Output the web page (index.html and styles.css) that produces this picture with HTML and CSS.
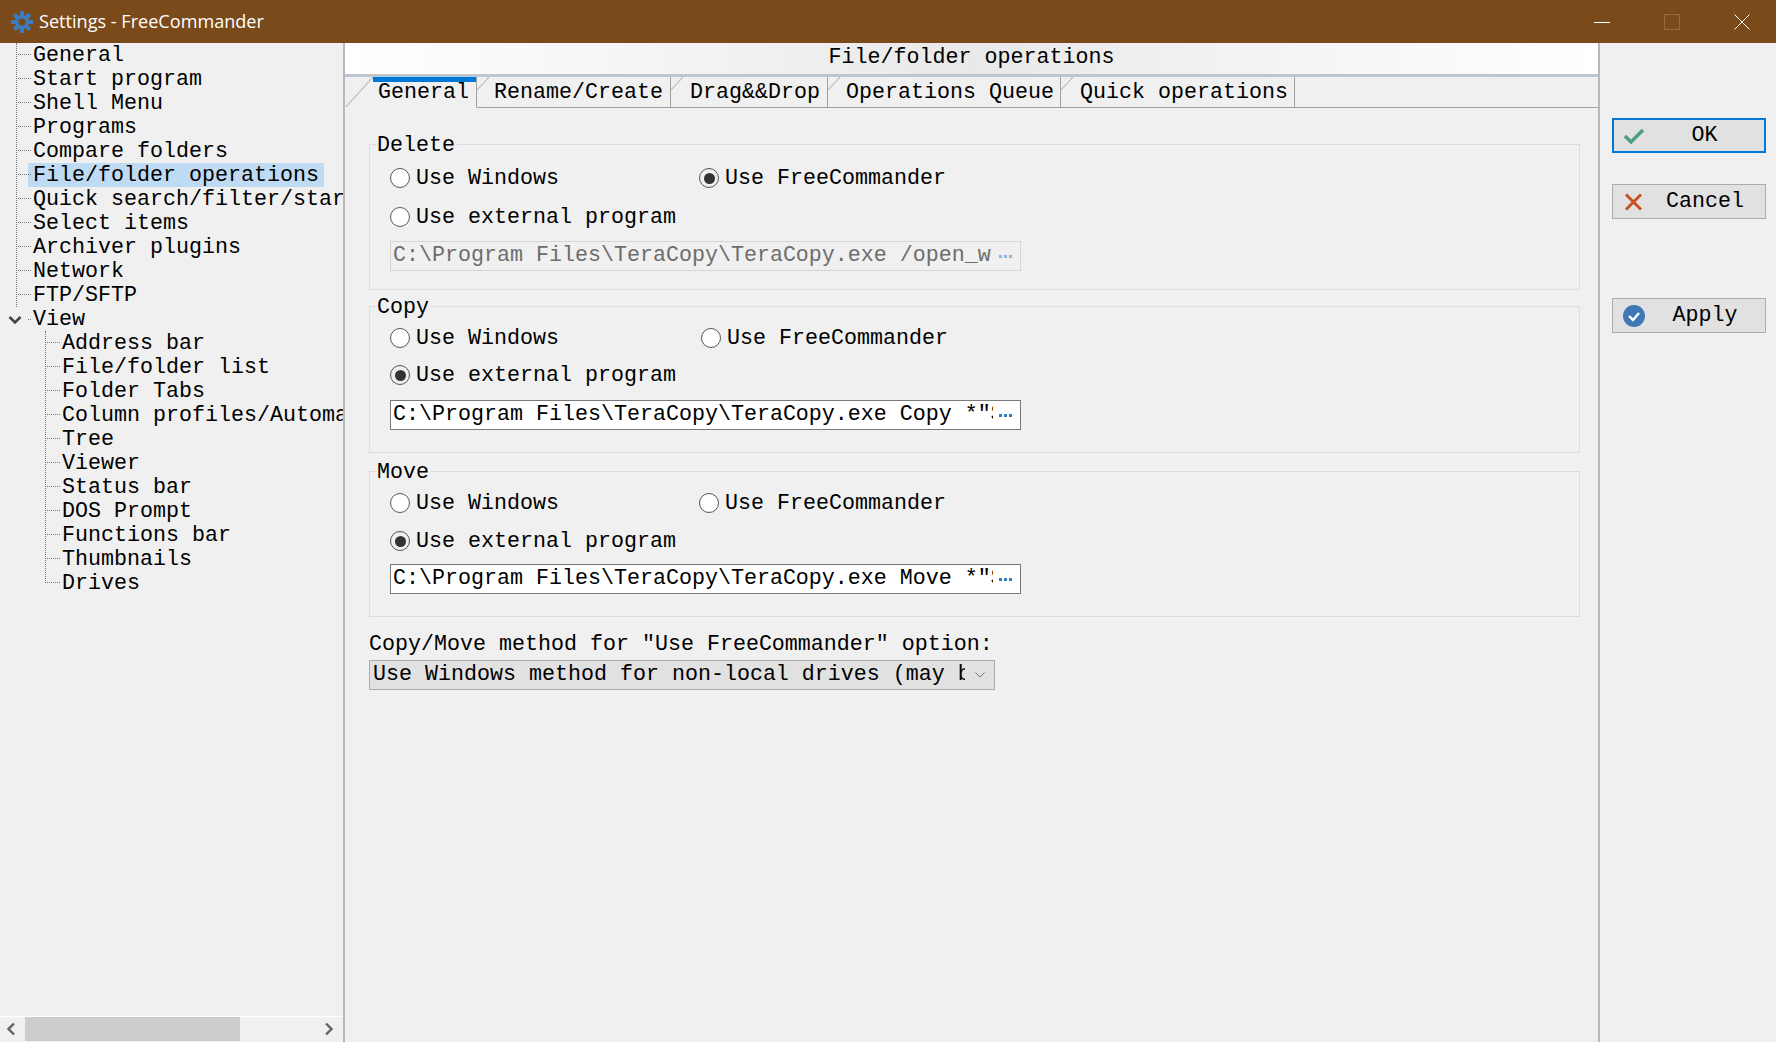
FILE: index.html
```html
<!DOCTYPE html>
<html lang="en">
<head>
<meta charset="utf-8">
<title>Settings - FreeCommander</title>
<link rel="stylesheet" href="styles.css">
</head>
<body>
<div class="window">
  <header class="titlebar">
    <svg class="app-icon" viewBox="0 0 24 24" width="24" height="24"><g fill="#3a7cbc"><path d="M12 5a7 7 0 1 0 0 14a7 7 0 0 0 0-14zm0 3.4a3.6 3.6 0 1 1 0 7.2a3.6 3.6 0 0 1 0-7.2z" fill-rule="evenodd"/><rect x="10" y="1" width="4" height="5"/><rect x="10" y="18" width="4" height="5"/><rect x="1" y="10" width="5" height="4"/><rect x="18" y="10" width="5" height="4"/><rect x="10" y="1" width="4" height="5" transform="rotate(45 12 12)"/><rect x="10" y="18" width="4" height="5" transform="rotate(45 12 12)"/><rect x="1" y="10" width="5" height="4" transform="rotate(45 12 12)"/><rect x="18" y="10" width="5" height="4" transform="rotate(45 12 12)"/></g></svg>
    <span class="title-text">Settings - FreeCommander</span>
    <div class="win-controls">
      <svg class="wc" viewBox="0 0 16 16" width="16" height="16"><path d="M0 8.5H16" stroke="#fff" fill="none"/></svg>
      <svg class="wc" viewBox="0 0 16 16" width="16" height="16"><rect x="0.5" y="0.5" width="15" height="15" stroke="#976b42" fill="none"/></svg>
      <svg class="wc" viewBox="0 0 16 16" width="16" height="16"><path d="M0.5 0.5L15.5 15.5M15.5 0.5L0.5 15.5" stroke="#fff" fill="none"/></svg>
    </div>
  </header>
  <div class="body">
    <aside class="tree-pane">
      <div class="tree-scroll">
        <ul class="tree">
          <li><span class="node">General</span></li>
          <li><span class="node">Start program</span></li>
          <li><span class="node">Shell Menu</span></li>
          <li><span class="node">Programs</span></li>
          <li><span class="node">Compare folders</span></li>
          <li><span class="node selected">File/folder operations</span></li>
          <li><span class="node">Quick search/filter/start</span></li>
          <li><span class="node">Select items</span></li>
          <li><span class="node">Archiver plugins</span></li>
          <li><span class="node">Network</span></li>
          <li><span class="node">FTP/SFTP</span></li>
          <li class="parent"><svg class="twisty" viewBox="0 0 14 10" width="14" height="10"><path d="M1.5 2L7 7.5L12.5 2" stroke="#444" stroke-width="2.6" fill="none"/></svg><span class="node">View</span></li>
        </ul>
        <ul class="tree sub">
          <li><span class="node">Address bar</span></li>
          <li><span class="node">File/folder list</span></li>
          <li><span class="node">Folder Tabs</span></li>
          <li><span class="node">Column profiles/Automatic</span></li>
          <li><span class="node">Tree</span></li>
          <li><span class="node">Viewer</span></li>
          <li><span class="node">Status bar</span></li>
          <li><span class="node">DOS Prompt</span></li>
          <li><span class="node">Functions bar</span></li>
          <li><span class="node">Thumbnails</span></li>
          <li><span class="node">Drives</span></li>
        </ul>
      </div>
      <div class="hscroll">
        <svg viewBox="0 0 10 14" width="10" height="14"><path d="M8 1.5L2.5 7L8 12.5" stroke="#606060" stroke-width="2.4" fill="none"/></svg>
        <div class="hscroll-track"><div class="hscroll-thumb"></div></div>
        <svg viewBox="0 0 10 14" width="10" height="14"><path d="M2 1.5L7.5 7L2 12.5" stroke="#606060" stroke-width="2.4" fill="none"/></svg>
      </div>
    </aside>
    <main class="content">
      <h1 class="page-title">File/folder operations</h1>
      <div class="page-rule"></div>
      <nav class="tabs">
        <span class="tab active t-general">General</span>
        <span class="tab t-rename">Rename/Create</span>
        <span class="tab t-drag">Drag&amp;&amp;Drop</span>
        <span class="tab t-ops">Operations Queue</span>
        <span class="tab t-quick">Quick operations</span>
      </nav>
      <div class="page">
        <section class="group g-delete">
          <div class="legend">Delete</div>
          <div class="row r1">
            <label class="opt col1"><i class="radio"></i><span class="opt-text">Use Windows</span></label>
            <label class="opt"><i class="radio on"></i><span class="opt-text">Use FreeCommander</span></label>
          </div>
          <div class="row r2"><label class="opt"><i class="radio"></i><span class="opt-text">Use external program</span></label></div>
          <div class="path disabled"><span class="path-text">C:\Program Files\TeraCopy\TeraCopy.exe /open_with</span><span class="dots"><b></b><b></b><b></b></span></div>
        </section>
        <section class="group g-copy">
          <div class="legend">Copy</div>
          <div class="row r1">
            <label class="opt col1 wide"><i class="radio"></i><span class="opt-text">Use Windows</span></label>
            <label class="opt"><i class="radio"></i><span class="opt-text">Use FreeCommander</span></label>
          </div>
          <div class="row r2"><label class="opt"><i class="radio on"></i><span class="opt-text">Use external program</span></label></div>
          <div class="path"><span class="path-text">C:\Program Files\TeraCopy\TeraCopy.exe Copy *"$</span><span class="dots"><b></b><b></b><b></b></span></div>
        </section>
        <section class="group g-move">
          <div class="legend">Move</div>
          <div class="row r1">
            <label class="opt col1"><i class="radio"></i><span class="opt-text">Use Windows</span></label>
            <label class="opt"><i class="radio"></i><span class="opt-text">Use FreeCommander</span></label>
          </div>
          <div class="row r2"><label class="opt"><i class="radio on"></i><span class="opt-text">Use external program</span></label></div>
          <div class="path"><span class="path-text">C:\Program Files\TeraCopy\TeraCopy.exe Move *"$</span><span class="dots"><b></b><b></b><b></b></span></div>
        </section>
        <div class="method-label">Copy/Move method for "Use FreeCommander" option:</div>
        <div class="select">
          <span class="select-text">Use Windows method for non-local drives (may be slow)</span>
          <svg viewBox="0 0 12 8" width="12" height="8"><path d="M1.5 1.5L6 6L10.5 1.5" stroke="#777" fill="none"/></svg>
        </div>
      </div>
    </main>
    <aside class="actions">
      <button class="btn primary">
        <svg viewBox="0 0 22 16" width="22" height="16"><path d="M2 8L8 14L20 2" stroke="#4f9e7c" stroke-width="3.4" fill="none"/></svg>
        <span class="btn-label">OK</span>
      </button>
      <button class="btn cancel">
        <svg viewBox="0 0 22 18" width="22" height="18"><path d="M3 1.5L18 16.5M18 1.5L3 16.5" stroke="#c9511f" stroke-width="3" fill="none"/></svg>
        <span class="btn-label">Cancel</span>
      </button>
      <button class="btn apply">
        <svg viewBox="0 0 22 22" width="22" height="22"><circle cx="11" cy="11" r="11" fill="#3f78b5"/><path d="M6 11L10 15L16 8" stroke="#fff" stroke-width="2.4" fill="none"/></svg>
        <span class="btn-label">Apply</span>
      </button>
    </aside>
  </div>
</div>
</body>
</html>
```
FILE: styles.css
```css
* { box-sizing: border-box; }
html, body { margin: 0; height: 100%; }
body {
  background: #f0f0f0;
  color: #000;
  font-family: "Liberation Mono", monospace;
  font-size: 21.67px;
  overflow: hidden;
}
.window { width: 1776px; height: 1042px; display: flex; flex-direction: column; }

.titlebar {
  height: 43px;
  flex: none;
  background: #7a4a1a;
  display: flex;
  align-items: center;
  padding-left: 10px;
}
.app-icon { margin-right: 5px; }
.title-text { font-family: "Open Sans", sans-serif; font-size: 18.1px; color: #fff; position: relative; top: -1px; }
.win-controls { margin-left: auto; display: flex; gap: 54px; padding-right: 26px; }
.wc { display: block; }

.body { flex: 1; display: flex; min-height: 0; }

.tree-pane {
  width: 345px;
  flex: none;
  border-right: 2px solid #b9b9b9;
  display: flex;
  flex-direction: column;
}
.tree-scroll { flex: 1; overflow: hidden; white-space: nowrap; }
.tree { list-style: none; margin: 0 0 0 16px; padding: 0; position: relative; }
.tree::before {
  content: "";
  position: absolute;
  left: 0;
  top: 0;
  bottom: 24px;
  border-left: 1px dotted #777;
}
.tree li {
  height: 24px;
  padding-left: 17px;
  position: relative;
}
.tree li::before {
  content: "";
  position: absolute;
  left: 0;
  width: 15px;
  top: 11px;
  border-top: 1px dotted #777;
}
.tree li.parent::before { left: 12px; width: 3px; top: 12px; }
.node { display: block; width: fit-content; height: 24px; line-height: 26px; }
.node.selected { background: #bfdbf3; margin-left: -5px; padding-left: 5px; padding-right: 5px; }
.twisty { position: absolute; left: -8px; top: 8px; }
.tree.sub { margin-left: 45px; }
.tree.sub::before { bottom: 12px; }

.hscroll {
  flex: none;
  height: 26px;
  border-top: 1px solid #fff;
  display: flex;
  align-items: center;
  padding: 0 9px 1px 6px;
}
.hscroll-track { flex: 1; align-self: stretch; padding-left: 9px; margin-right: 9px; }
.hscroll-thumb { width: 215px; height: 100%; background: #cdcdcd; }

.content { flex: none; width: 1255px; border-right: 2px solid #b9b9b9; display: flex; flex-direction: column; }
.page-title {
  margin: 0;
  height: 31px;
  line-height: 30px;
  font-size: inherit;
  font-weight: normal;
  text-align: center;
  background: linear-gradient(90deg, #fff 0%, #e9e9e9 50%, #fff 100%);
}
.page-rule { height: 3px; background: #c4c4c4; border-bottom: 1px solid #a9cdf0; flex: none; }

.tabs {
  display: flex;
  height: 31px;
  flex: none;
  border-bottom: 1px solid #a0a0a0;
  white-space: pre;
  line-height: 32px;
}
.tab {
  height: 31px;
  position: relative;
  border-right: 1px solid #a0a0a0;
  border-bottom: 1px solid #a0a0a0;
  background: linear-gradient(to bottom right, transparent calc(50% - 1px), #b5b5b5 50%, transparent calc(50% + 1px)) left top / 12px 13px no-repeat, #f0f0f0;
}
.t-general {
  width: 132px;
  padding-left: 33px;
  background: linear-gradient(to bottom right, transparent calc(50% - 1px), #b5b5b5 50%, transparent calc(50% + 1px)) left top / 28px 31px no-repeat, #f0f0f0;
  border-bottom-color: #f0f0f0;
}
.t-general::before {
  content: "";
  position: absolute;
  left: 28px;
  right: 0;
  top: 0;
  height: 5px;
  background: #0078d7;
}
.t-rename { width: 194px; padding-left: 17px; }
.t-drag { width: 157px; padding-left: 19px; }
.t-ops { width: 233px; padding-left: 18px; }
.t-quick { width: 234px; padding-left: 19px; }

.page { padding: 36px 18px 0 24px; flex: 1; }
.group { border: 1px solid #dcdcdc; padding: 0 0 0 20px; }
.g-delete { height: 146px; }
.g-copy { height: 147px; margin-top: 16px; }
.g-move { height: 146px; margin-top: 18px; }
.legend {
  height: 24px;
  line-height: 26px;
  margin: -12px 0 0 -14px;
  width: fit-content;
  padding: 0 2px 0 1px;
  background: #f0f0f0;
}
.row { display: flex; height: 24px; white-space: pre; }
.g-delete .r1 { margin-top: 9px; }
.g-delete .r2 { margin-top: 15px; }
.g-delete .path { margin-top: 12px; }
.g-copy .r1 { margin-top: 7px; }
.g-copy .r2 { margin-top: 13px; }
.g-copy .path { margin-top: 13px; }
.g-move .r1 { margin-top: 7px; }
.g-move .r2 { margin-top: 14px; }
.g-move .path { margin-top: 11px; }
.opt { display: flex; align-items: center; }
.opt-text { line-height: 26px; height: 24px; }
.col1 { width: 309px; }
.col1.wide { width: 311px; }
.radio {
  width: 20px;
  height: 20px;
  border-radius: 50%;
  border: 1px solid #555;
  background: #fff;
  margin-right: 6px;
  flex: none;
  display: flex;
  align-items: center;
  justify-content: center;
}
.radio.on { background: #f0f0f0; }
.radio.on::after { content: ""; width: 11px; height: 11px; border-radius: 50%; background: #333; }

.path {
  width: 631px;
  height: 30px;
  border: 1px solid #7a7a7a;
  background: #fff;
  display: flex;
  align-items: center;
  padding: 0 7px 0 2px;
  white-space: pre;
}
.path-text { width: 600px; overflow: hidden; flex: none; line-height: 24px; height: 25px; }
.dots { display: flex; gap: 2px; margin-left: 6px; }
.dots b { width: 3px; height: 3px; background: #3a7cc0; display: block; }
.path.disabled { border-color: #d5d5d5; background: #f0f0f0; color: #6d6d6d; }
.path.disabled .path-text { width: 599px; }
.path.disabled .dots { margin-left: 7px; }
.path.disabled .dots b { background: #8fb4de; }

.method-label { margin-top: 15px; height: 24px; line-height: 25px; white-space: pre; }
.select {
  margin-top: 4px;
  width: 626px;
  height: 30px;
  border: 1px solid #adadad;
  background: #e1e1e1;
  display: flex;
  align-items: center;
  padding-left: 3px;
  white-space: pre;
}
.select-text { width: 592px; overflow: hidden; flex: none; line-height: 24px; height: 25px; }
.select svg { margin-left: 9px; }

.actions { flex: 1; padding: 75px 10px 0 12px; }
.btn {
  display: flex;
  align-items: center;
  width: 154px;
  height: 35px;
  padding: 0 2px 0 10px;
  border: 1px solid #adadad;
  background: #e1e1e1;
  font: inherit;
  color: #000;
}
.btn svg { flex: none; }
.btn-label { flex: 1; text-align: center; line-height: 28px; padding-left: 2px; }
.primary { border: 2px solid #0078d7; padding-left: 9px; }
.cancel { margin-top: 31px; }
.apply { margin-top: 79px; }
```
